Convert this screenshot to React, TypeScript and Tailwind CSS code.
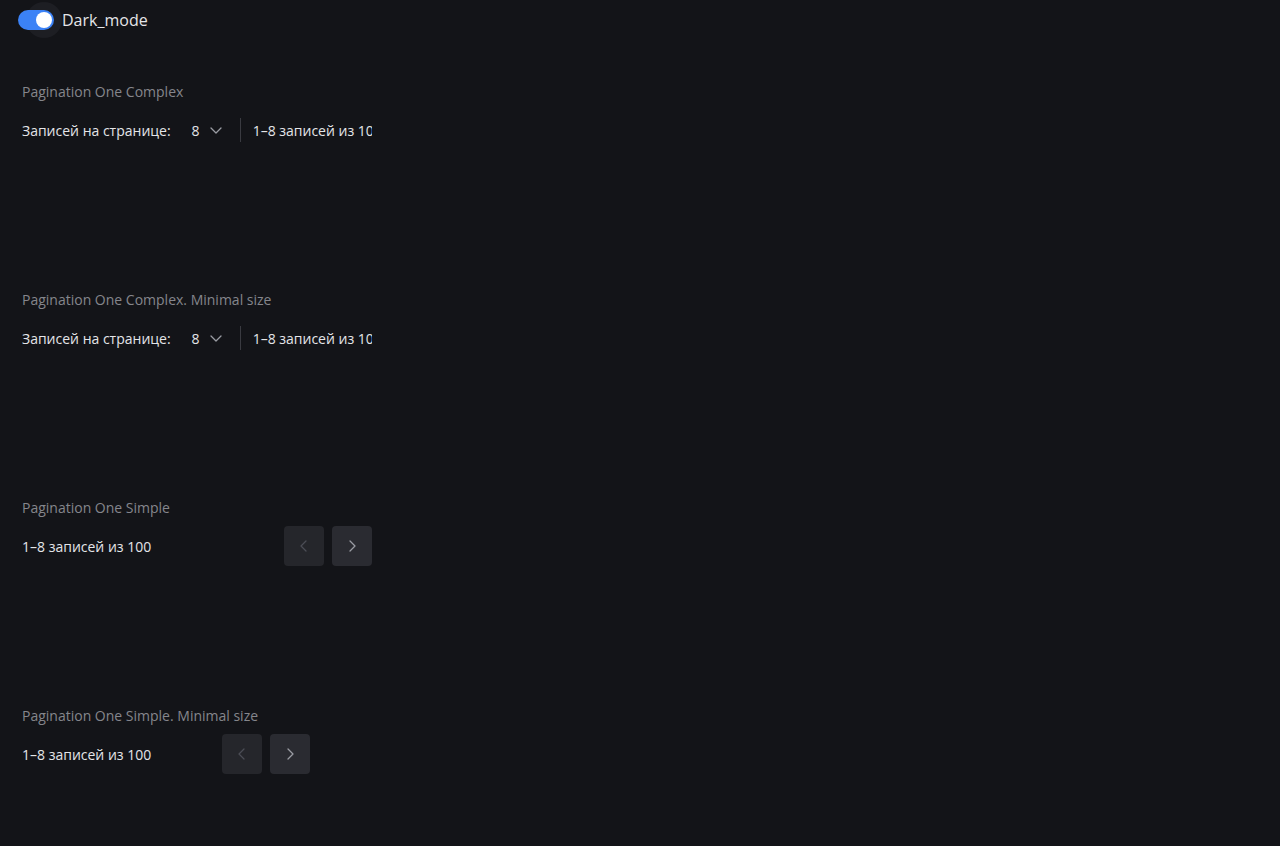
import React from "react";

const Chevron = ({ dir, dim }: { dir: "left" | "right" | "down"; dim?: boolean }) => {
  const d =
    dir === "left" ? "M10 3 L5 8 L10 13" : dir === "right" ? "M6 3 L11 8 L6 13" : "M3 6 L8 11 L13 6";
  return (
    <svg width="16" height="16" viewBox="0 0 16 16" fill="none">
      <path d={d} stroke={dim ? "#4b4d55" : "#9a9ca3"} strokeWidth="1.3" strokeLinecap="round" strokeLinejoin="round" />
    </svg>
  );
};

const Label = ({ children }: { children: React.ReactNode }) => (
  <div className="h-5 leading-5 text-[14px] text-[#85868c]">{children}</div>
);

const Complex = ({ label }: { label: string }) => (
  <div className="flex flex-col gap-2">
    <Label>{label}</Label>
    <div className="h-10 w-[350px] overflow-hidden flex items-center text-[14px] text-[#e4e5e8] whitespace-nowrap">
      <span className="shrink-0">Записей на странице:</span>
      <div className="shrink-0 flex items-center ml-[21px] gap-[8px]">
        <span>8</span>
        <Chevron dir="down" />
      </div>
      <div className="shrink-0 ml-[16px] w-px h-6 bg-[#3a3b41]" />
      <span className="shrink-0 ml-[12px]">1–8 записей из 100</span>
    </div>
  </div>
);

const Simple = ({ label, width }: { label: string; width: string }) => (
  <div className="flex flex-col gap-2">
    <Label>{label}</Label>
    <div className={`h-10 flex items-center justify-between text-[14px] text-[#e4e5e8] ${width}`}>
      <span>1–8 записей из 100</span>
      <div className="flex gap-2">
        <div className="w-10 h-10 rounded-[4px] bg-[#25262b] flex items-center justify-center">
          <Chevron dir="left" dim />
        </div>
        <div className="w-10 h-10 rounded-[4px] bg-[#2a2b31] flex items-center justify-center">
          <Chevron dir="right" />
        </div>
      </div>
    </div>
  </div>
);

export default function App() {
  return (
    <div
      className="min-h-[846px] w-full bg-[#131418]"
      style={{ fontFamily: "'Open Sans', Lato, sans-serif" }}
    >
      <div className="h-10 flex items-center pl-[18px]">
        <div className="relative w-9 h-5">
          <div className="absolute left-[8px] top-[-8px] w-9 h-9 rounded-full bg-[#1d1e23]" />
          <div className="absolute inset-0 rounded-full bg-[#3b82f6]" />
          <div className="absolute left-[18px] top-[2px] w-4 h-4 rounded-full bg-white" />
        </div>
        <span className="ml-2 text-[16px] text-[#e4e5e8]">Dark_mode</span>
      </div>
      <div className="pl-[22px] pt-[42px] flex flex-col gap-[140px]">
        <Complex label="Pagination One Complex" />
        <Complex label="Pagination One Complex. Minimal size" />
        <Simple label="Pagination One Simple" width="w-[350px]" />
        <Simple label="Pagination One Simple. Minimal size" width="w-[288px]" />
      </div>
    </div>
  );
}
